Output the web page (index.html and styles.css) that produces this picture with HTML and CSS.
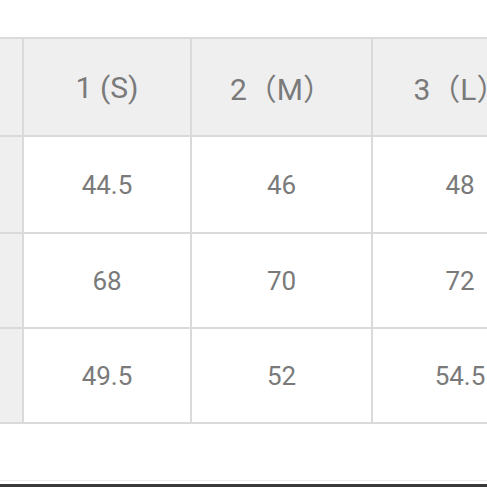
FILE: index.html
```html
<!DOCTYPE html>
<html lang="ko">
<head>
<meta charset="utf-8">
<link rel="stylesheet" href="styles.css">
</head>
<body>
<div class="page">
  <div class="size-table">
    <div class="cell head side"></div>
    <div class="cell head">1 (S)</div>
    <div class="cell head">2（M）</div>
    <div class="cell head">3（L）</div>

    <div class="cell side"></div>
    <div class="cell">44.5</div>
    <div class="cell">46</div>
    <div class="cell">48</div>

    <div class="cell side"></div>
    <div class="cell">68</div>
    <div class="cell">70</div>
    <div class="cell">72</div>

    <div class="cell side"></div>
    <div class="cell">49.5</div>
    <div class="cell">52</div>
    <div class="cell">54.5</div>
  </div>
  <div class="footer">
    <div class="footer-bar"></div>
  </div>
</div>
</body>
</html>
```

FILE: styles.css
```css
html, body {
  margin: 0;
  padding: 0;
  background: #ffffff;
  overflow: hidden;
}

.page {
  width: 487px;
  height: 487px;
  overflow: hidden;
  padding-top: 37px;
  box-sizing: border-box;
  display: flex;
  flex-direction: column;
  font-family: Roboto, "Noto Sans CJK KR", sans-serif;
}

.size-table {
  display: grid;
  grid-template-columns: 22px 166px 179px 174px;
  grid-template-rows: 96px 95px 93px 93px;
  gap: 2px;
  padding: 2px 2px 2px 0;
  background: #dadada;
  width: max-content;
}

.cell {
  background: #ffffff;
  display: flex;
  align-items: center;
  justify-content: center;
  color: #7a7a7a;
  font-size: 26px;
  white-space: nowrap;
}

.cell.head {
  font-size: 30px;
}

.cell.head,
.cell.side {
  background: #efefef;
}

.footer {
  margin-top: auto;
  border-top: 1px solid #ececec;
  padding-top: 3px;
}

.footer-bar {
  height: 3px;
  background: #3a3a3a;
}
```
